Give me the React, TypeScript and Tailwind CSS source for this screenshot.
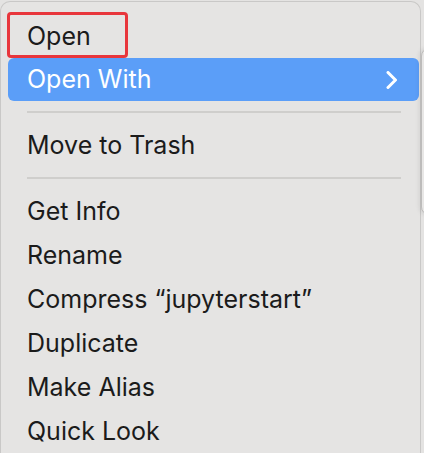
const Separator = () => (
  <div className="h-[22px] flex items-center pl-[19px] pr-[18px]">
    <div className="h-[2px] w-full bg-[#cfcecc]" />
  </div>
);

const Item = ({ label }: { label: string }) => (
  <div className="h-[44px] flex items-center pl-[19px] text-[#1b1b1b]">{label}</div>
);

const App = () => {
  return (
    <div
      className="relative w-[424px] h-[453px] overflow-hidden bg-[#e4e3e2] text-[25px] leading-none"
      style={{ fontFamily: 'Inter, "Liberation Sans", sans-serif' }}
    >
      {/* main menu */}
      <div className="w-[421px] h-[470px] mt-px border-t border-l border-r border-[#c9c8c7] rounded-t-[10px] bg-[#e5e4e3] pt-[12px] pl-[7px] pr-px">
        <Item label="Open" />
        <div className="h-[43px] flex items-center justify-between pl-[19px] pr-[21px] rounded-[6px] bg-[#5b9ef8] text-white">
          <span>Open With</span>
          <svg width="12" height="18" viewBox="0 0 12 18" fill="none">
            <path d="M2 1.5 9.5 9 2 16.5" stroke="white" strokeWidth="3" strokeLinecap="round" strokeLinejoin="round" />
          </svg>
        </div>
        <Separator />
        <Item label="Move to Trash" />
        <Separator />
        <Item label="Get Info" />
        <Item label="Rename" />
        <Item label="Compress “jupyterstart”" />
        <Item label="Duplicate" />
        <Item label="Make Alias" />
        <Item label="Quick Look" />
      </div>

      {/* submenu peeking at the right */}
      <div className="absolute left-[421px] top-[48px] w-[20px] h-[167px] rounded-l-[8px] border border-[#bdbcbb] bg-[#e8e7e6] shadow-[-2px_0_4px_rgba(0,0,0,0.08)]" />

      {/* red annotation box */}
      <div className="absolute left-[7px] top-[12px] w-[121px] h-[46px] rounded-[4px] border-[3px] border-[#e8363c]" />
    </div>
  );
};

export default App;
